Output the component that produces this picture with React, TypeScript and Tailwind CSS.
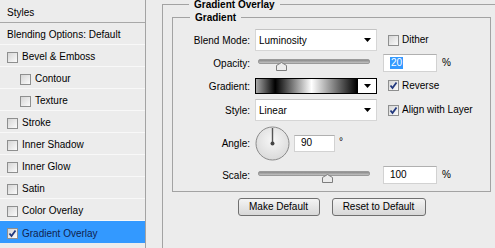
import React from 'react';

type Item = { label: string; indent?: boolean; checked?: boolean; active?: boolean };

const items: Item[] = [
    { label: 'Bevel & Emboss' },
    { label: 'Contour', indent: true },
    { label: 'Texture', indent: true },
    { label: 'Stroke' },
    { label: 'Inner Shadow' },
    { label: 'Inner Glow' },
    { label: 'Satin' },
    { label: 'Color Overlay' },
    { label: 'Gradient Overlay', checked: true, active: true },
];

function Check({ checked }: { checked?: boolean }) {
    return (
        <span className="w-[11px] h-[11px] shrink-0 border border-[#8e8f8f] bg-gradient-to-br from-[#d6d6d6] to-[#fbfbfb] flex items-center justify-center">
            {checked && (
                <svg width="9" height="9" viewBox="0 0 9 9">
                    <path d="M1.5 4.5 L3.5 7 L7.5 1.5" fill="none" stroke="#21387e" strokeWidth="1.8" />
                </svg>
            )}
        </span>
    );
}

function Arrow() {
    return (
        <svg width="7" height="4" viewBox="0 0 7 4">
            <path d="M0 0 H7 L3.5 4 Z" fill="#000" />
        </svg>
    );
}

function Dropdown({ value }: { value: string }) {
    return (
        <div className="w-[122px] h-[22px] bg-white border border-[#d6d6d6] border-t-[#c4c4c4] flex items-center justify-between pl-[3px] pr-[5px]">
            <span className="pt-[1px]">{value}</span>
            <Arrow />
        </div>
    );
}

function Slider({ pos }: { pos: number }) {
    return (
        <div className="w-[122px] h-[20px] relative">
            <div className="absolute left-[3px] top-[6px] w-[112px] h-[5px] rounded-[2px] bg-gradient-to-b from-[#8a8a8a] to-[#c2c2c2] border border-[#9a9a9a]" />
            <svg className="absolute top-[9px]" style={{ left: pos - 5 }} width="11" height="9" viewBox="0 0 11 9">
                <path d="M0.5 8.5 V3.5 L5.5 0.5 L10.5 3.5 V8.5 Z" fill="#ececec" stroke="#7d7d7d" />
            </svg>
        </div>
    );
}

function NumBox({ children, w }: { children: React.ReactNode; w: string }) {
    return (
        <div className={`${w} h-[18px] bg-white border border-[#d2d2d2] border-t-[#b0b0b0] flex items-center pl-[6px]`}>
            {children}
        </div>
    );
}

function Row({ label, h, mt, children }: { label: string; h: string; mt: string; children: React.ReactNode }) {
    return (
        <div className={`flex items-center ${h} ${mt}`}>
            <div className="w-[77px] text-right pt-[2px]">{label}</div>
            <div className="ml-[5px] flex items-center">{children}</div>
        </div>
    );
}

export default function App() {
    return (
        <div className="w-[495px] h-[248px] overflow-hidden bg-[#ececec] flex font-['Liberation_Sans',Arial,sans-serif] text-[10px] text-black leading-none">
            {/* SIDEBAR */}
            <div className="w-[146px] shrink-0 border-r border-[#a3a3a3] flex flex-col">
                <div className="h-[23px] border-b border-[#a8a8a8] pl-[7px] pt-[3px] flex items-center">Styles</div>
                <div className="h-[22px] border-b border-[#f8f8f8] pl-[7px] pt-[3px] flex items-center">Blending Options: Default</div>
                {items.map((it) => (
                    <div
                        key={it.label}
                        className={`h-[22px] pt-[3px] flex items-center gap-[4px] ${it.indent ? 'pl-[20px]' : 'pl-[7px]'} ${it.active ? 'bg-[#3399ff] text-[#0f1f4f]' : 'border-b border-[#f8f8f8]'}`}
                    >
                        <Check checked={it.checked} />
                        <span>{it.label}</span>
                    </div>
                ))}
            </div>

            {/* CONTENT */}
            <div className="flex-1 pl-[16px] overflow-hidden">
                <fieldset className="w-[345px] h-[270px] border border-[#a3a3a3] pl-[9px]">
                    <legend className="ml-[17px] px-[5px] font-bold leading-[9px]">Gradient Overlay</legend>
                    <fieldset className="w-[319px] mt-[4px] border border-[#a3a3a3] pt-[7px] pb-[6px]">
                        <legend className="ml-[17px] px-[5px] font-bold leading-[9px]">Gradient</legend>

                        <Row label="Blend Mode:" h="h-[22px]" mt="mt-0">
                            <Dropdown value="Luminosity" />
                            <span className="ml-[11px] flex items-center gap-[3px]">
                                <Check />
                                Dither
                            </span>
                        </Row>

                        <Row label="Opacity:" h="h-[20px]" mt="mt-[2px]">
                            <Slider pos={26} />
                            <div className="ml-[6px] flex items-center">
                                <NumBox w="w-[54px]">
                                    <span className="bg-[#3399ff] text-white px-[1px] py-[1px]">20</span>
                                </NumBox>
                                <span className="ml-[5px]">%</span>
                            </div>
                        </Row>

                        <Row label="Gradient:" h="h-[21px]" mt="mt-[2px]">
                            <div className="w-[122px] h-[16px] border border-black flex bg-white">
                                <div className="flex-1 bg-[linear-gradient(to_right,#a8a8a8_0%,#000_19%,#fff_55%,#000_100%)]" />
                                <div className="w-[19px] border-l border-black flex items-center justify-center">
                                    <Arrow />
                                </div>
                            </div>
                            <span className="ml-[11px] flex items-center gap-[3px]">
                                <Check checked />
                                Reverse
                            </span>
                        </Row>

                        <Row label="Style:" h="h-[22px]" mt="mt-[3px]">
                            <Dropdown value="Linear" />
                            <span className="ml-[11px] flex items-center gap-[3px]">
                                <Check checked />
                                Align with Layer
                            </span>
                        </Row>

                        <Row label="Angle:" h="h-[36px]" mt="mt-[4px]">
                            <svg width="35" height="35" viewBox="0 0 35 35">
                                <defs>
                                    <radialGradient id="dial" cx="50%" cy="40%" r="60%">
                                        <stop offset="0%" stopColor="#f7f7f7" />
                                        <stop offset="100%" stopColor="#dadada" />
                                    </radialGradient>
                                </defs>
                                <circle cx="17.5" cy="17.5" r="16.5" fill="url(#dial)" stroke="#8a8a8a" />
                                <line x1="17.5" y1="17.5" x2="17.5" y2="2" stroke="#555" strokeWidth="1.4" />
                                <circle cx="17.5" cy="17.5" r="2" fill="#444" />
                            </svg>
                            <div className="ml-[4px] flex items-start">
                                <div className="w-[41px] h-[17px] bg-white border border-[#d2d2d2] border-t-[#b0b0b0] flex items-center pl-[6px]">90</div>
                                <span className="ml-[4px] mt-[2px]">°</span>
                            </div>
                        </Row>

                        <Row label="Scale:" h="h-[20px]" mt="mt-[4px]">
                            <Slider pos={72} />
                            <div className="ml-[6px] flex items-center">
                                <NumBox w="w-[54px]">100</NumBox>
                                <span className="ml-[5px]">%</span>
                            </div>
                        </Row>
                    </fieldset>

                    <div className="w-[319px] mt-[6px] flex justify-center gap-[12px]">
                        <button className="w-[82px] h-[18px] rounded-[3px] border border-[#707070] bg-gradient-to-b from-[#f4f4f4] to-[#d8d8d8]">Make Default</button>
                        <button className="w-[94px] h-[18px] rounded-[3px] border border-[#707070] bg-gradient-to-b from-[#f4f4f4] to-[#d8d8d8]">Reset to Default</button>
                    </div>
                </fieldset>
            </div>
        </div>
    );
}
